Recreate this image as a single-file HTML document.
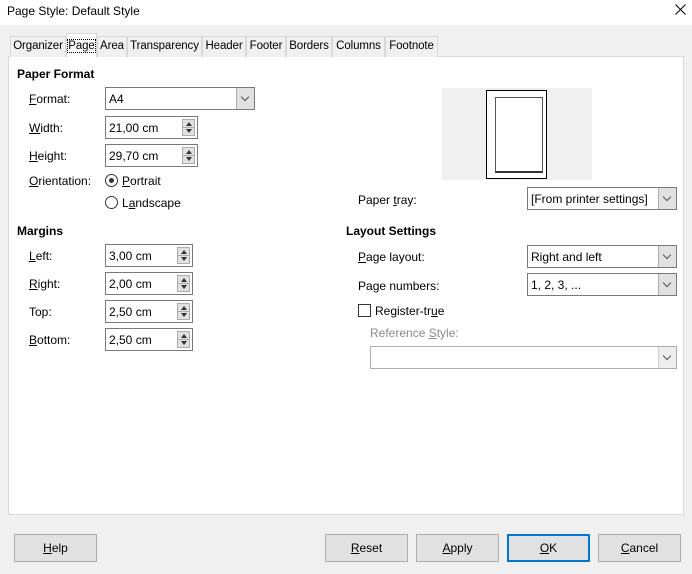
<!DOCTYPE html><html><head><style>
*{box-sizing:border-box}
body{margin:0;width:692px;height:574px;background:#f0f0f0;font-family:"Liberation Sans",sans-serif;font-size:12px;color:#000;position:relative;overflow:hidden}
.a{position:absolute;white-space:nowrap}
.title{left:0;top:0;width:692px;height:25px;background:#fff}
.tab{top:36px;height:21px;border:1px solid #d9d9d9;border-bottom:none;background:#f0f0f0;text-align:center;line-height:19px;font-size:11.5px;letter-spacing:-0.1px}
.panel{left:8px;top:56px;width:676px;height:459px;background:#fff;border:1px solid #d9d9d9}
.b{font-weight:bold}
.fld{height:23px;border:1px solid #7a7a7a;background:#fff;padding-left:3px;line-height:23px}
.spin{position:absolute;right:2px;top:2px;width:13px;height:17px;border:1px solid #adadad;background:#e1e1e1}
.spin:before{content:"";position:absolute;left:3px;top:2px;border:3px solid transparent;border-bottom:4px solid #333;border-top:none}
.spin:after{content:"";position:absolute;left:3px;bottom:2px;border:3px solid transparent;border-top:4px solid #333;border-bottom:none}
.spin i{position:absolute;left:0;right:0;top:7px;border-top:1px solid #adadad}
.dd{position:absolute;right:0;top:0;width:18px;height:21px;background:#e1e1e1;border-left:1px solid #adadad}
.dd:after{content:"";position:absolute;left:5px;top:6px;width:5px;height:5px;border-right:1px solid #555;border-bottom:1px solid #555;transform:rotate(45deg)}
.btn{top:534px;width:83px;height:28px;border:1px solid #adadad;background:#e1e1e1;text-align:center;line-height:27px}
u{text-decoration:underline}
</style></head><body>
<div class="a title"></div>
<div class="a" style="left:7px;top:4px;font-size:12px">Page Style: Default Style</div>
<svg class="a" style="left:675px;top:4px" width="11" height="11"><path d="M0.5 0.5L10.5 10.5M10.5 0.5L0.5 10.5" stroke="#000" stroke-width="1"/></svg>
<div class="a panel"></div>
<div class="a tab" style="left:10px;width:56px">Organizer</div>
<div class="a tab" style="left:66px;width:31px;top:33px;height:24px;background:#fff;line-height:25px"><span style="outline:1px dotted #000">Page</span></div>
<div class="a tab" style="left:97px;width:30px">Area</div>
<div class="a tab" style="left:127px;width:75px">Transparency</div>
<div class="a tab" style="left:202px;width:44px">Header</div>
<div class="a tab" style="left:246px;width:40px">Footer</div>
<div class="a tab" style="left:286px;width:46px">Borders</div>
<div class="a tab" style="left:332px;width:53px">Columns</div>
<div class="a tab" style="left:385px;width:53px">Footnote</div>

<div class="a b" style="left:17px;top:67px">Paper Format</div>
<div class="a" style="left:29px;top:92px"><u>F</u>ormat:</div>
<div class="a fld" style="left:105px;top:87px;width:150px">A4<span class="dd"></span></div>
<div class="a" style="left:29px;top:121px"><u>W</u>idth:</div>
<div class="a fld" style="left:105px;top:116px;width:93px">21,00 cm<span class="spin"><i></i></span></div>
<div class="a" style="left:29px;top:149px"><u>H</u>eight:</div>
<div class="a fld" style="left:105px;top:144px;width:93px">29,70 cm<span class="spin"><i></i></span></div>
<div class="a" style="left:29px;top:174px"><u>O</u>rientation:</div>
<div class="a" style="left:105px;top:174px;width:13px;height:13px;border:1px solid #333;border-radius:50%;background:#fff"><div style="position:absolute;left:3px;top:3px;width:5px;height:5px;border-radius:50%;background:#333"></div></div>
<div class="a" style="left:122px;top:174px"><u>P</u>ortrait</div>
<div class="a" style="left:105px;top:196px;width:13px;height:13px;border:1px solid #333;border-radius:50%;background:#fff"></div>
<div class="a" style="left:122px;top:196px">L<u>a</u>ndscape</div>

<div class="a" style="left:442px;top:88px;width:150px;height:92px;background:#f0f0f0"></div>
<div class="a" style="left:486px;top:90px;width:61px;height:89px;border:1px solid #000;background:#fff"></div>
<div class="a" style="left:495px;top:97px;width:48px;height:76px;border:1px solid #555;border-bottom:2px solid #333;background:#fff"></div>

<div class="a" style="left:358px;top:193px">Paper <u>t</u>ray:</div>
<div class="a fld" style="left:527px;top:187px;width:150px">[From printer settings]<span class="dd"></span></div>

<div class="a b" style="left:17px;top:224px">Margins</div>
<div class="a" style="left:29px;top:249px"><u>L</u>eft:</div>
<div class="a fld" style="left:105px;top:244px;width:88px">3,00 cm<span class="spin"><i></i></span></div>
<div class="a" style="left:29px;top:277px"><u>R</u>ight:</div>
<div class="a fld" style="left:105px;top:272px;width:88px">2,00 cm<span class="spin"><i></i></span></div>
<div class="a" style="left:29px;top:305px">Top:</div>
<div class="a fld" style="left:105px;top:300px;width:88px">2,50 cm<span class="spin"><i></i></span></div>
<div class="a" style="left:29px;top:333px"><u>B</u>ottom:</div>
<div class="a fld" style="left:105px;top:328px;width:88px">2,50 cm<span class="spin"><i></i></span></div>

<div class="a b" style="left:346px;top:224px">Layout Settings</div>
<div class="a" style="left:358px;top:250px"><u>P</u>age layout:</div>
<div class="a fld" style="left:527px;top:245px;width:150px">Right and left<span class="dd"></span></div>
<div class="a" style="left:358px;top:279px">Pa<u>g</u>e numbers:</div>
<div class="a fld" style="left:527px;top:273px;width:150px">1, 2, 3, ...<span class="dd"></span></div>
<div class="a" style="left:358px;top:304px;width:13px;height:13px;border:1px solid #333;background:#fff"></div>
<div class="a" style="left:375px;top:304px">Register-tr<u>u</u>e</div>
<div class="a" style="left:370px;top:326px;color:#8a8a8a">Reference <u>S</u>tyle:</div>
<div class="a fld" style="left:370px;top:346px;width:307px;border-color:#adadad"><span class="dd" style="background:#eee;border-left-color:#ccc"></span></div>

<div class="a btn" style="left:14px"><u>H</u>elp</div>
<div class="a btn" style="left:325px"><u>R</u>eset</div>
<div class="a btn" style="left:416px"><u>A</u>pply</div>
<div class="a btn" style="left:507px;border:2px solid #0078d7;line-height:25px"><u>O</u>K</div>
<div class="a btn" style="left:598px"><u>C</u>ancel</div>
</body></html>
